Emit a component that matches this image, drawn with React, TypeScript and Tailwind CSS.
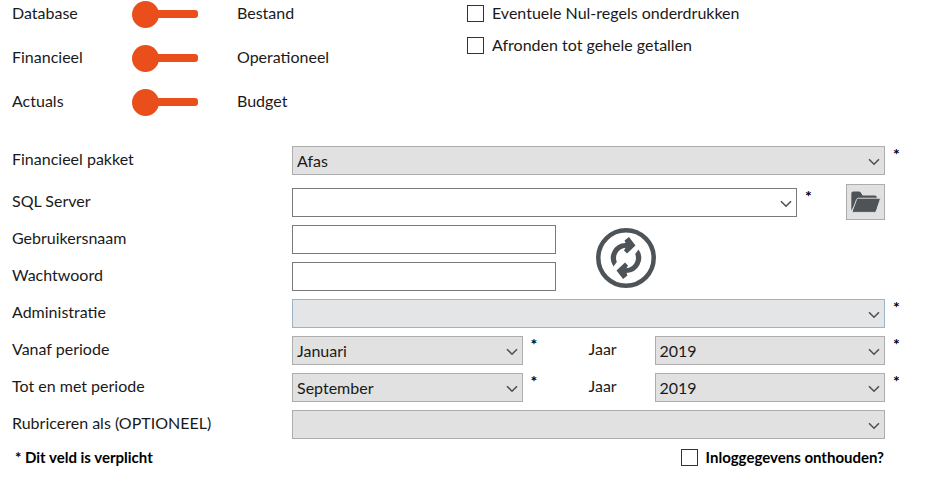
import { useState } from "react";
import type { ReactNode } from "react";

const labelText = "text-[16px] leading-5";
const row = "grid grid-cols-[280px_1fr_60px]";

function Chevron() {
  return (
    <svg
      viewBox="0 0 12 8"
      className="pointer-events-none absolute right-[5px] top-[12px] h-2 w-3"
      fill="none"
      stroke="#505050"
      strokeWidth="1.6"
    >
      <path d="M1 1.2 6 6.2 11 1.2" />
    </svg>
  );
}

type SelectProps = {
  id: string;
  label?: string;
  options: string[];
  tone?: string;
};

function Select({ id, label, options, tone = "border-[#adadad] bg-[#e1e1e1]" }: SelectProps) {
  return (
    <div className="relative min-w-0 flex-1">
      <select
        id={id}
        aria-label={label}
        className={`block h-[29px] w-full appearance-none border px-1 text-[16px] leading-5 outline-none ${tone}`}
      >
        {options.map((option) => (
          <option key={option}>{option}</option>
        ))}
      </select>
      <Chevron />
    </div>
  );
}

function Required({ className = "" }: { className?: string }) {
  return (
    <span aria-hidden="true" className={`pl-2 text-[16px] font-bold leading-4 text-black ${className}`}>
      *
    </span>
  );
}

function FieldRow({
  id,
  label,
  required = false,
  children,
}: {
  id: string;
  label: string;
  required?: boolean;
  children: ReactNode;
}) {
  return (
    <div className={row}>
      <label htmlFor={id} className={`pt-[3px] ${labelText}`}>
        {label}
      </label>
      <div className="flex min-w-0">{children}</div>
      {required && <Required />}
    </div>
  );
}

function Toggle({ left, right }: { left: string; right: string }) {
  const [on, setOn] = useState(false);
  return (
    <div className={`grid h-7 grid-cols-[120px_105px_1fr] ${labelText}`}>
      <span className="pt-[3px]">{left}</span>
      <button
        type="button"
        role="switch"
        aria-checked={on}
        aria-label={`${left} / ${right}`}
        onClick={() => setOn(!on)}
        className={`flex w-[66px] items-center ${on ? "flex-row-reverse" : ""}`}
      >
        <span className="size-[27px] shrink-0 rounded-full bg-[#e94e1b]" />
        <span className={`h-2 flex-1 rounded-[3px] bg-[#e94e1b] ${on ? "-mr-1" : "-ml-1"}`} />
      </button>
      <span className="pt-[3px]">{right}</span>
    </div>
  );
}

function Checkbox({ label, bold = false }: { label: string; bold?: boolean }) {
  return (
    <label className={`flex items-center leading-5 ${bold ? "gap-2 text-[15px] font-bold text-black" : "gap-2 text-[16px]"}`}>
      <input
        type="checkbox"
        className="size-[17px] shrink-0 appearance-none border border-[#333] bg-white checked:bg-[#e94e1b]"
      />
      {label}
    </label>
  );
}

function PeriodRow({ id, label, month, year }: { id: string; label: string; month: string; year: string }) {
  return (
    <FieldRow id={id} label={label} required>
      <Select id={id} options={[month]} />
      <div className="flex w-[132px]">
        <Required className="w-[66px]" />
        <label htmlFor={`${id}-jaar`} className={`pt-[3px] ${labelText}`}>
          Jaar
        </label>
      </div>
      <Select id={`${id}-jaar`} options={[year]} />
    </FieldRow>
  );
}

function FolderIcon() {
  return (
    <svg viewBox="0 0 38 36" className="h-full w-full" fill="#4d5357">
      <path d="M4 27V9q0-2 2-2h6q1 0 2 1l2 3H29q2 0 2 2v3H12q-1.500 0-2 1.500Z" />
      <path
        d="M11.500 14H33.500q1.500 0 1 1.500l-4 12q-.5 1.500-2 1.500H6q-1.500 0-1-1.500l4.500-12q.5-1.500 2-1.500Z"
        stroke="#e1e1e1"
        strokeWidth="1"
      />
    </svg>
  );
}

function RefreshIcon() {
  return (
    <svg viewBox="0 0 60 60" className="h-full w-full" fill="#4d5357">
      <circle cx="30" cy="30" r="27.700" fill="none" stroke="#4d5357" strokeWidth="4.500" />
      <path
        id="refresh-arrow"
        d="M17.500 38.500A15 15 0 0 1 29.500 15L28.500 12.500 33 9 39.500 17.500 31 25.500 28 22.500 29.500 19.800A10.300 10.300 0 0 0 20.800 34Z"
      />
      <use href="#refresh-arrow" transform="rotate(180 30 30)" />
    </svg>
  );
}

export default function App() {
  const inputClass = "h-[29px] w-[264px] border border-[#7a7a7a] bg-white px-1 text-[16px] outline-none";
  return (
    <form className="bg-white pl-3 font-['Lato','Open_Sans',sans-serif] text-[#1a1a1a]">
      <div className="flex">
        <div className="flex w-[455px] flex-col gap-4">
          <Toggle left="Database" right="Bestand" />
          <Toggle left="Financieel" right="Operationeel" />
          <Toggle left="Actuals" right="Budget" />
        </div>
        <div className="flex flex-col gap-3 pt-[3px]">
          <Checkbox label="Eventuele Nul-regels onderdrukken" />
          <Checkbox label="Afronden tot gehele getallen" />
        </div>
      </div>

      <div className="mt-[30px] flex flex-col gap-2">
        <FieldRow id="pakket" label="Financieel pakket" required>
          <Select id="pakket" options={["Afas"]} />
        </FieldRow>

        <div className="mt-[5px]">
          <FieldRow id="server" label="SQL Server">
            <Select id="server" options={[""]} tone="border-[#7a7a7a] bg-white" />
            <Required className="w-[49px]" />
            <button
              type="button"
              aria-label="Map openen"
              className="-my-1 h-[36px] w-[39px] border border-[#adadad] bg-[#e1e1e1]"
            >
              <FolderIcon />
            </button>
          </FieldRow>
        </div>

        <div className="flex items-center gap-10">
          <div className="grid grid-cols-[280px_264px] gap-y-2">
            <label htmlFor="gebruiker" className={`pt-[3px] ${labelText}`}>
              Gebruikersnaam
            </label>
            <input id="gebruiker" type="text" className={inputClass} />
            <label htmlFor="wachtwoord" className={`pt-[3px] ${labelText}`}>
              Wachtwoord
            </label>
            <input id="wachtwoord" type="password" className={inputClass} />
          </div>
          <button type="button" aria-label="Vernieuwen" className="size-[60px]">
            <RefreshIcon />
          </button>
        </div>

        <FieldRow id="administratie" label="Administratie" required>
          <Select id="administratie" options={[""]} tone="border-[#9db2c7] bg-[#e3e5e7]" />
        </FieldRow>
        <PeriodRow id="vanaf" label="Vanaf periode" month="Januari" year="2019" />
        <PeriodRow id="tot" label="Tot en met periode" month="September" year="2019" />
        <FieldRow id="rubriceren" label="Rubriceren als (OPTIONEEL)">
          <Select id="rubriceren" options={[""]} />
        </FieldRow>

        <div className="flex justify-between pr-[61px]">
          <p className="pl-[3px] text-[15px] font-bold leading-5 text-black">* Dit veld is verplicht</p>
          <Checkbox label="Inloggegevens onthouden?" bold />
        </div>
      </div>
    </form>
  );
}
